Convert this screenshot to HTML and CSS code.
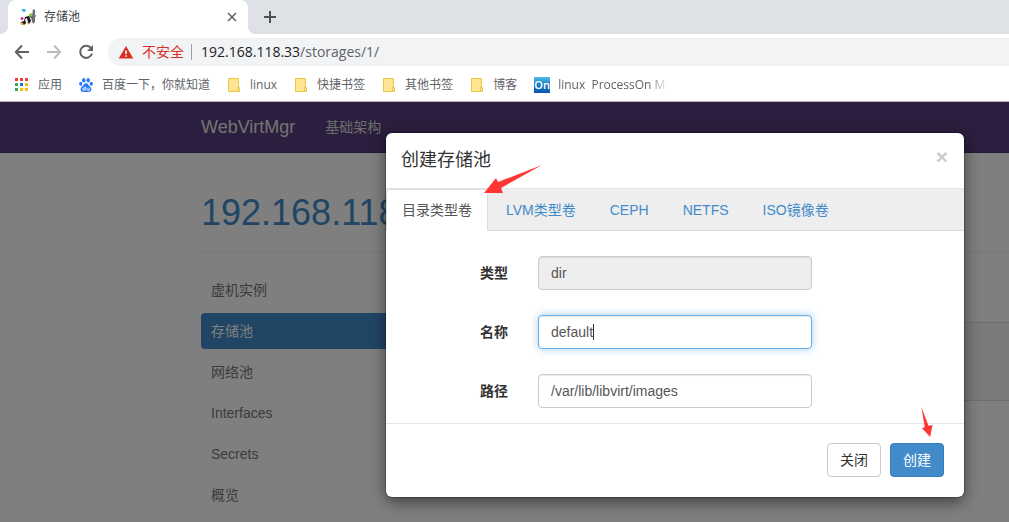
FILE: index.html
```html
<!DOCTYPE html>
<html lang="zh-CN">
<head>
<meta charset="utf-8">
<title>存储池</title>
<link rel="stylesheet" href="styles.css">
</head>
<body>
<header class="browser">
  <div class="tabstrip">
    <div class="browser-tab">
      <svg class="favicon" width="16" height="16" viewBox="0 0 16 16" aria-hidden="true">
        <path d="M2 0h3l1 2-2 1-2-1z" fill="#2ab5dc"/>
        <path d="M13 0l2 1v12l-2 2-2-6-2-1V6l3 1z" fill="#6b6e70"/>
        <path d="M9 5l3-1v3l-3 1z" fill="#8fc33e"/>
        <circle cx="2" cy="9.500" r="1.500" fill="#d6248f"/>
        <path d="M5 8l4-1 2 5-2 3-2-2-3 3H1v-3l3-1z" fill="#191919"/>
        <path d="M5 10l2-1 1 4-2 1z" fill="#fff"/>
        <path d="M0 13l3 1 1 2H1zM7 13l2 1-1 2z" fill="#e8bd31"/>
        <path d="M14 6h2v2h-2z" fill="#8b8e91"/>
      </svg>
      <span class="browser-title">存储池</span>
      <button class="icon-button" aria-label="关闭标签页"><svg width="10" height="10" viewBox="0 0 10 10"><path d="M1 1l8 8M9 1L1 9" stroke="#5f6368" stroke-width="1.600"/></svg></button>
    </div>
    <button class="icon-button new-tab" aria-label="新标签页"><svg width="12" height="12" viewBox="0 0 12 12"><path d="M6 0v12M0 6h12" stroke="#4d5156" stroke-width="2"/></svg></button>
  </div>
  <div class="toolbar">
    <button class="icon-button" aria-label="后退"><svg width="16" height="16" viewBox="0 0 16 16"><path d="M15 8H2M8 1.500L1.800 8 8 14.500" fill="none" stroke="#5f6368" stroke-width="2"/></svg></button>
    <button class="icon-button" aria-label="前进"><svg width="16" height="16" viewBox="0 0 16 16"><path d="M1 8h13M8 1.500L14.200 8 8 14.500" fill="none" stroke="#babcbe" stroke-width="2"/></svg></button>
    <button class="icon-button" aria-label="重新加载"><svg width="16" height="16" viewBox="0 0 16 16"><path d="M13 4.200A6 6 0 1 0 14 9.500" fill="none" stroke="#5f6368" stroke-width="2"/><path d="M15 1v6H9z" fill="#5f6368"/></svg></button>
    <div class="address">
      <svg width="16" height="14" viewBox="0 0 16 14" aria-hidden="true"><path d="M8 1l7.300 12.500H.7z" fill="#d93025"/><path d="M7.200 5.500h1.600v3.500H7.200zM7.200 10.200h1.600v1.600H7.200z" fill="#fff"/></svg>
      <span class="insecure">不安全</span>
      <span class="url">192.168.118.33<span class="url-path">/storages/1/</span></span>
    </div>
  </div>
  <nav class="bookmarks" aria-label="书签">
    <a class="bookmark" href="#"><svg width="14" height="14" viewBox="0 0 14 14" aria-hidden="true"><path d="M0 0h3v3H0zM5 0h3v3H5zM10 0h3v3h-3z" fill="#ea4335"/><path d="M0 5h3v3H0zM0 10h3v3H0z" fill="#34a853"/><path d="M5 5h3v3H5z" fill="#1a73e8"/><path d="M10 5h3v3h-3zM5 10h3v3H5zM10 10h3v3h-3z" fill="#fbbc04"/></svg>应用</a>
    <a class="bookmark" href="#"><svg width="14" height="14" viewBox="0 0 14 14" aria-hidden="true"><g fill="#2b7cf7"><ellipse cx="4.800" cy="2.200" rx="1.700" ry="2.200"/><ellipse cx="9.200" cy="2.200" rx="1.700" ry="2.200"/><ellipse cx="1.700" cy="5.800" rx="1.600" ry="2"/><ellipse cx="12.300" cy="5.800" rx="1.600" ry="2"/><path d="M7 5.300c2 0 2.500 2 4 3.300 2.700 2.300 1.300 5.400-1.300 5.400H4.300C1.700 14 .3 10.900 3 8.600 4.500 7.300 5 5.300 7 5.300z"/></g><path d="M6.200 8.500v3.700H4.800c-1.500 0-1.500-2.200 0-2.200h1.400M8 9.800v1.600c0 1 .5.900 2.200.9V9.800" fill="none" stroke="#fff" stroke-width=".9"/></svg>百度一下，你就知道</a>
    <a class="bookmark" href="#"><svg width="14" height="14" viewBox="0 0 14 14" aria-hidden="true"><path d="M1.500.5h10v9h1v4h-11z" fill="#ffe592" stroke="#ebc64b"/><path d="M10.500 13v-3.500h1" fill="none" stroke="#ebc64b"/></svg>linux</a>
    <a class="bookmark" href="#"><svg width="14" height="14" viewBox="0 0 14 14" aria-hidden="true"><path d="M1.500.5h10v9h1v4h-11z" fill="#ffe592" stroke="#ebc64b"/><path d="M10.500 13v-3.500h1" fill="none" stroke="#ebc64b"/></svg>快捷书签</a>
    <a class="bookmark" href="#"><svg width="14" height="14" viewBox="0 0 14 14" aria-hidden="true"><path d="M1.500.5h10v9h1v4h-11z" fill="#ffe592" stroke="#ebc64b"/><path d="M10.500 13v-3.500h1" fill="none" stroke="#ebc64b"/></svg>其他书签</a>
    <a class="bookmark" href="#"><svg width="14" height="14" viewBox="0 0 14 14" aria-hidden="true"><path d="M1.500.5h10v9h1v4h-11z" fill="#ffe592" stroke="#ebc64b"/><path d="M10.500 13v-3.500h1" fill="none" stroke="#ebc64b"/></svg>博客</a>
    <a class="bookmark processon" href="#"><span class="on-icon">On</span><span class="fade">linux  ProcessOn Mi</span></a>
  </nav>
</header>

<div class="viewport">
  <nav class="navbar">
    <a class="brand" href="#">WebVirtMgr</a>
    <a class="nav-link" href="#">基础架构</a>
  </nav>
  <main class="page">
    <h1>192.168.118</h1>
    <div class="columns">
      <nav class="side">
        <a href="#">虚机实例</a>
        <a class="current" href="#" aria-current="page">存储池</a>
        <a href="#">网络池</a>
        <a href="#">Interfaces</a>
        <a href="#">Secrets</a>
        <a href="#">概览</a>
      </nav>
      <section class="content"><div class="well"></div></section>
    </div>
  </main>
  <div class="backdrop"></div>

  <div class="modal" role="dialog" aria-labelledby="modal-title">
    <div class="modal-header">
      <h2 id="modal-title">创建存储池</h2>
      <button class="close" aria-label="关闭窗口">×</button>
    </div>
    <div class="tabs">
      <a class="tab active" href="#">目录类型卷</a>
      <a class="tab" href="#">LVM类型卷</a>
      <a class="tab" href="#">CEPH</a>
      <a class="tab" href="#">NETFS</a>
      <a class="tab" href="#">ISO镜像卷</a>
    </div>
    <form>
      <div class="fields">
        <div class="field"><label for="type">类型</label><div class="control"><input id="type" value="dir" disabled></div></div>
        <div class="field"><label for="name">名称</label><div class="control"><input id="name" class="focused" value="default"><span class="caret"></span></div></div>
        <div class="field"><label for="path">路径</label><div class="control"><input id="path" value="/var/lib/libvirt/images"></div></div>
      </div>
      <div class="modal-footer">
        <button type="button" class="btn">关闭</button>
        <button type="button" class="btn primary">创建</button>
      </div>
    </form>
    <svg class="pointer pointer-tab" width="60" height="30" viewBox="0 0 60 30" aria-hidden="true"><path d="M0 28L12 13l2 4L58 0 17 23l2 5z" fill="#ff3836"/></svg>
    <svg class="pointer pointer-create" width="12" height="32" viewBox="0 0 12 32" aria-hidden="true"><path d="M.3.700L7.500 19.700l4-.7-2.300 12L1 22.300 3.700 21z" fill="#ff3836"/></svg>
  </div>
</div>
</body>
</html>
```
FILE: styles.css
```css
* { box-sizing: border-box; }

body {
  margin: 0;
  height: 100vh;
  display: flex;
  flex-direction: column;
  overflow: hidden;
  font: 14px/20px "Liberation Sans", "Noto Sans CJK SC", sans-serif;
  color: #333;
}

a { text-decoration: none; }
button { font: inherit; cursor: pointer; }

/* Browser frame */
.browser {
  flex: none;
  background: #fff;
  border-bottom: 1px solid #b6b4b6;
  font-family: "Open Sans", "Noto Sans CJK SC", sans-serif;
}

.icon-button {
  display: flex;
  padding: 0;
  border: 0;
  background: none;
}

.tabstrip {
  display: flex;
  align-items: center;
  height: 34px;
  padding-left: 8px;
  background: #dee1e6;
}

.browser-tab {
  position: relative;
  display: flex;
  align-items: center;
  gap: 8px;
  width: 240px;
  height: 34px;
  padding: 0 11px 0 12px;
  border-radius: 8px 8px 0 0;
  background: #fff;
}

.browser-tab::before,
.browser-tab::after {
  content: "";
  position: absolute;
  bottom: 0;
  width: 8px;
  height: 8px;
}

.browser-tab::before {
  left: -8px;
  background: radial-gradient(circle at 0 0, #dee1e6 8px, #fff 8px);
}

.browser-tab::after {
  right: -8px;
  background: radial-gradient(circle at 100% 0, #dee1e6 8px, #fff 8px);
}

.browser-title { flex: 1; font-size: 12px; color: #3c4043; }
.new-tab { margin-left: 16px; }

.toolbar {
  display: flex;
  align-items: center;
  gap: 16px;
  height: 36px;
  padding-left: 14px;
}

.toolbar .address { margin-left: -2px; }

.address {
  flex: 1;
  display: flex;
  align-items: center;
  gap: 8px;
  height: 28px;
  padding-left: 10px;
  border-radius: 14px 0 0 14px;
  background: #f1f3f4;
  color: #5f6368;
}

.insecure {
  padding-right: 7px;
  border-right: 1px solid #9aa0a6;
  line-height: 16px;
  color: #d93025;
}

.url { padding-left: 1px; color: #202124; }
.url-path { color: #5f6368; }

.bookmarks {
  display: flex;
  align-items: center;
  gap: 17px;
  height: 31px;
  padding: 0 15px 2px;
}

.bookmark {
  display: flex;
  align-items: center;
  gap: 9px;
  font-size: 12px;
  color: #5f6368;
  white-space: pre;
}

.processon { gap: 8px; }

.on-icon {
  width: 16px;
  height: 16px;
  background: linear-gradient(#4dbde6, #1c7cc4 50%, #0a57ae);
  color: #fff;
  font-size: 11px;
  font-weight: 600;
  line-height: 16px;
  text-align: center;
}

.fade { mask-image: linear-gradient(to right, #000 82%, transparent); }

/* Web page */
.viewport {
  position: relative;
  flex: 1;
  overflow: hidden;
  background: #fff;
}

.navbar {
  display: flex;
  align-items: center;
  gap: 30px;
  height: 51px;
  padding-left: 201px;
  border-bottom: 1px solid #463265;
  background: #563d7c;
}

.brand { font-size: 18px; color: #e7e7e7; }
.nav-link { color: #d9d9d9; }

.page { padding: 40px 0 0 201px; }

h1 {
  margin: 0;
  padding-bottom: 18px;
  border-bottom: 1px solid #eee;
  font-size: 36px;
  font-weight: 400;
  line-height: 40px;
  color: #428bca;
}

.columns {
  display: flex;
  gap: 30px;
  padding-top: 20px;
}

.side {
  display: flex;
  flex-direction: column;
  gap: 5px;
  width: 200px;
}

.side a {
  padding: 8px 10px;
  border-radius: 4px;
  color: #777;
}

.side .current { background: #428bca; color: #fff; }

.content { flex: 1; padding-top: 50px; }

.well {
  height: 79px;
  border: 1px solid #ddd;
  border-width: 1px 0;
  background: #f5f5f5;
}

.backdrop {
  position: absolute;
  inset: 0;
  background: rgba(0, 0, 0, 0.5);
}

/* Dialog */
.modal {
  position: absolute;
  top: 31px;
  left: 386px;
  right: 45px;
  border-radius: 6px;
  background: #fff;
  box-shadow: 0 0 0 1px rgba(0, 0, 0, 0.2), 0 5px 15px rgba(0, 0, 0, 0.5);
}

.modal-header {
  display: flex;
  justify-content: space-between;
  align-items: flex-start;
  padding: 15px 16px 15px 15px;
  border-bottom: 1px solid #e5e5e5;
}

h2 {
  margin: 0;
  font-size: 18px;
  font-weight: 400;
  line-height: 25px;
}

.close {
  padding: 0;
  border: 0;
  background: none;
  font-size: 21px;
  font-weight: 700;
  line-height: 18px;
  color: #ccc;
}

.tabs {
  display: flex;
  gap: 2px;
  border-bottom: 1px solid #ddd;
  background: #eee;
}

.tab {
  margin-bottom: -1px;
  padding: 10px 15px;
  border: 1px solid transparent;
  border-radius: 4px 4px 0 0;
  color: #428bca;
}

.tab.active {
  border-color: #ddd #ddd transparent;
  background: #fff;
  color: #555;
}

.fields {
  display: flex;
  flex-direction: column;
  gap: 25px;
  padding: 25px 15px 15px;
}

.field {
  display: grid;
  grid-template-columns: 107px 274px;
  gap: 30px;
  align-items: center;
}

label { font-weight: 700; text-align: right; }

.control { position: relative; }

input {
  display: block;
  width: 100%;
  height: 34px;
  padding: 6px 12px;
  border: 1px solid #ccc;
  border-radius: 4px;
  background: #fff;
  box-shadow: inset 0 1px 1px rgba(0, 0, 0, 0.08);
  font: inherit;
  color: #555;
}

input:disabled { background: #eee; }

.focused {
  border-color: #66afe9;
  outline: 0;
  box-shadow: inset 0 1px 1px rgba(0, 0, 0, 0.08), 0 0 8px rgba(102, 175, 233, 0.6);
}

.caret {
  position: absolute;
  top: 9px;
  left: 55px;
  width: 1px;
  height: 16px;
  background: #333;
}

.modal-footer {
  display: flex;
  justify-content: flex-end;
  gap: 9px;
  padding: 19px 20px 20px;
  border-top: 1px solid #e5e5e5;
}

.btn {
  padding: 6px 12px;
  border: 1px solid #ccc;
  border-radius: 4px;
  background: #fff;
  color: #333;
}

.primary {
  border-color: #357ebd;
  background: #428bca;
  color: #fff;
}

/* Guide arrows */
.pointer { position: absolute; }
.pointer-tab { top: 32px; left: 98px; }
.pointer-create { top: 273px; right: 31px; }
```
